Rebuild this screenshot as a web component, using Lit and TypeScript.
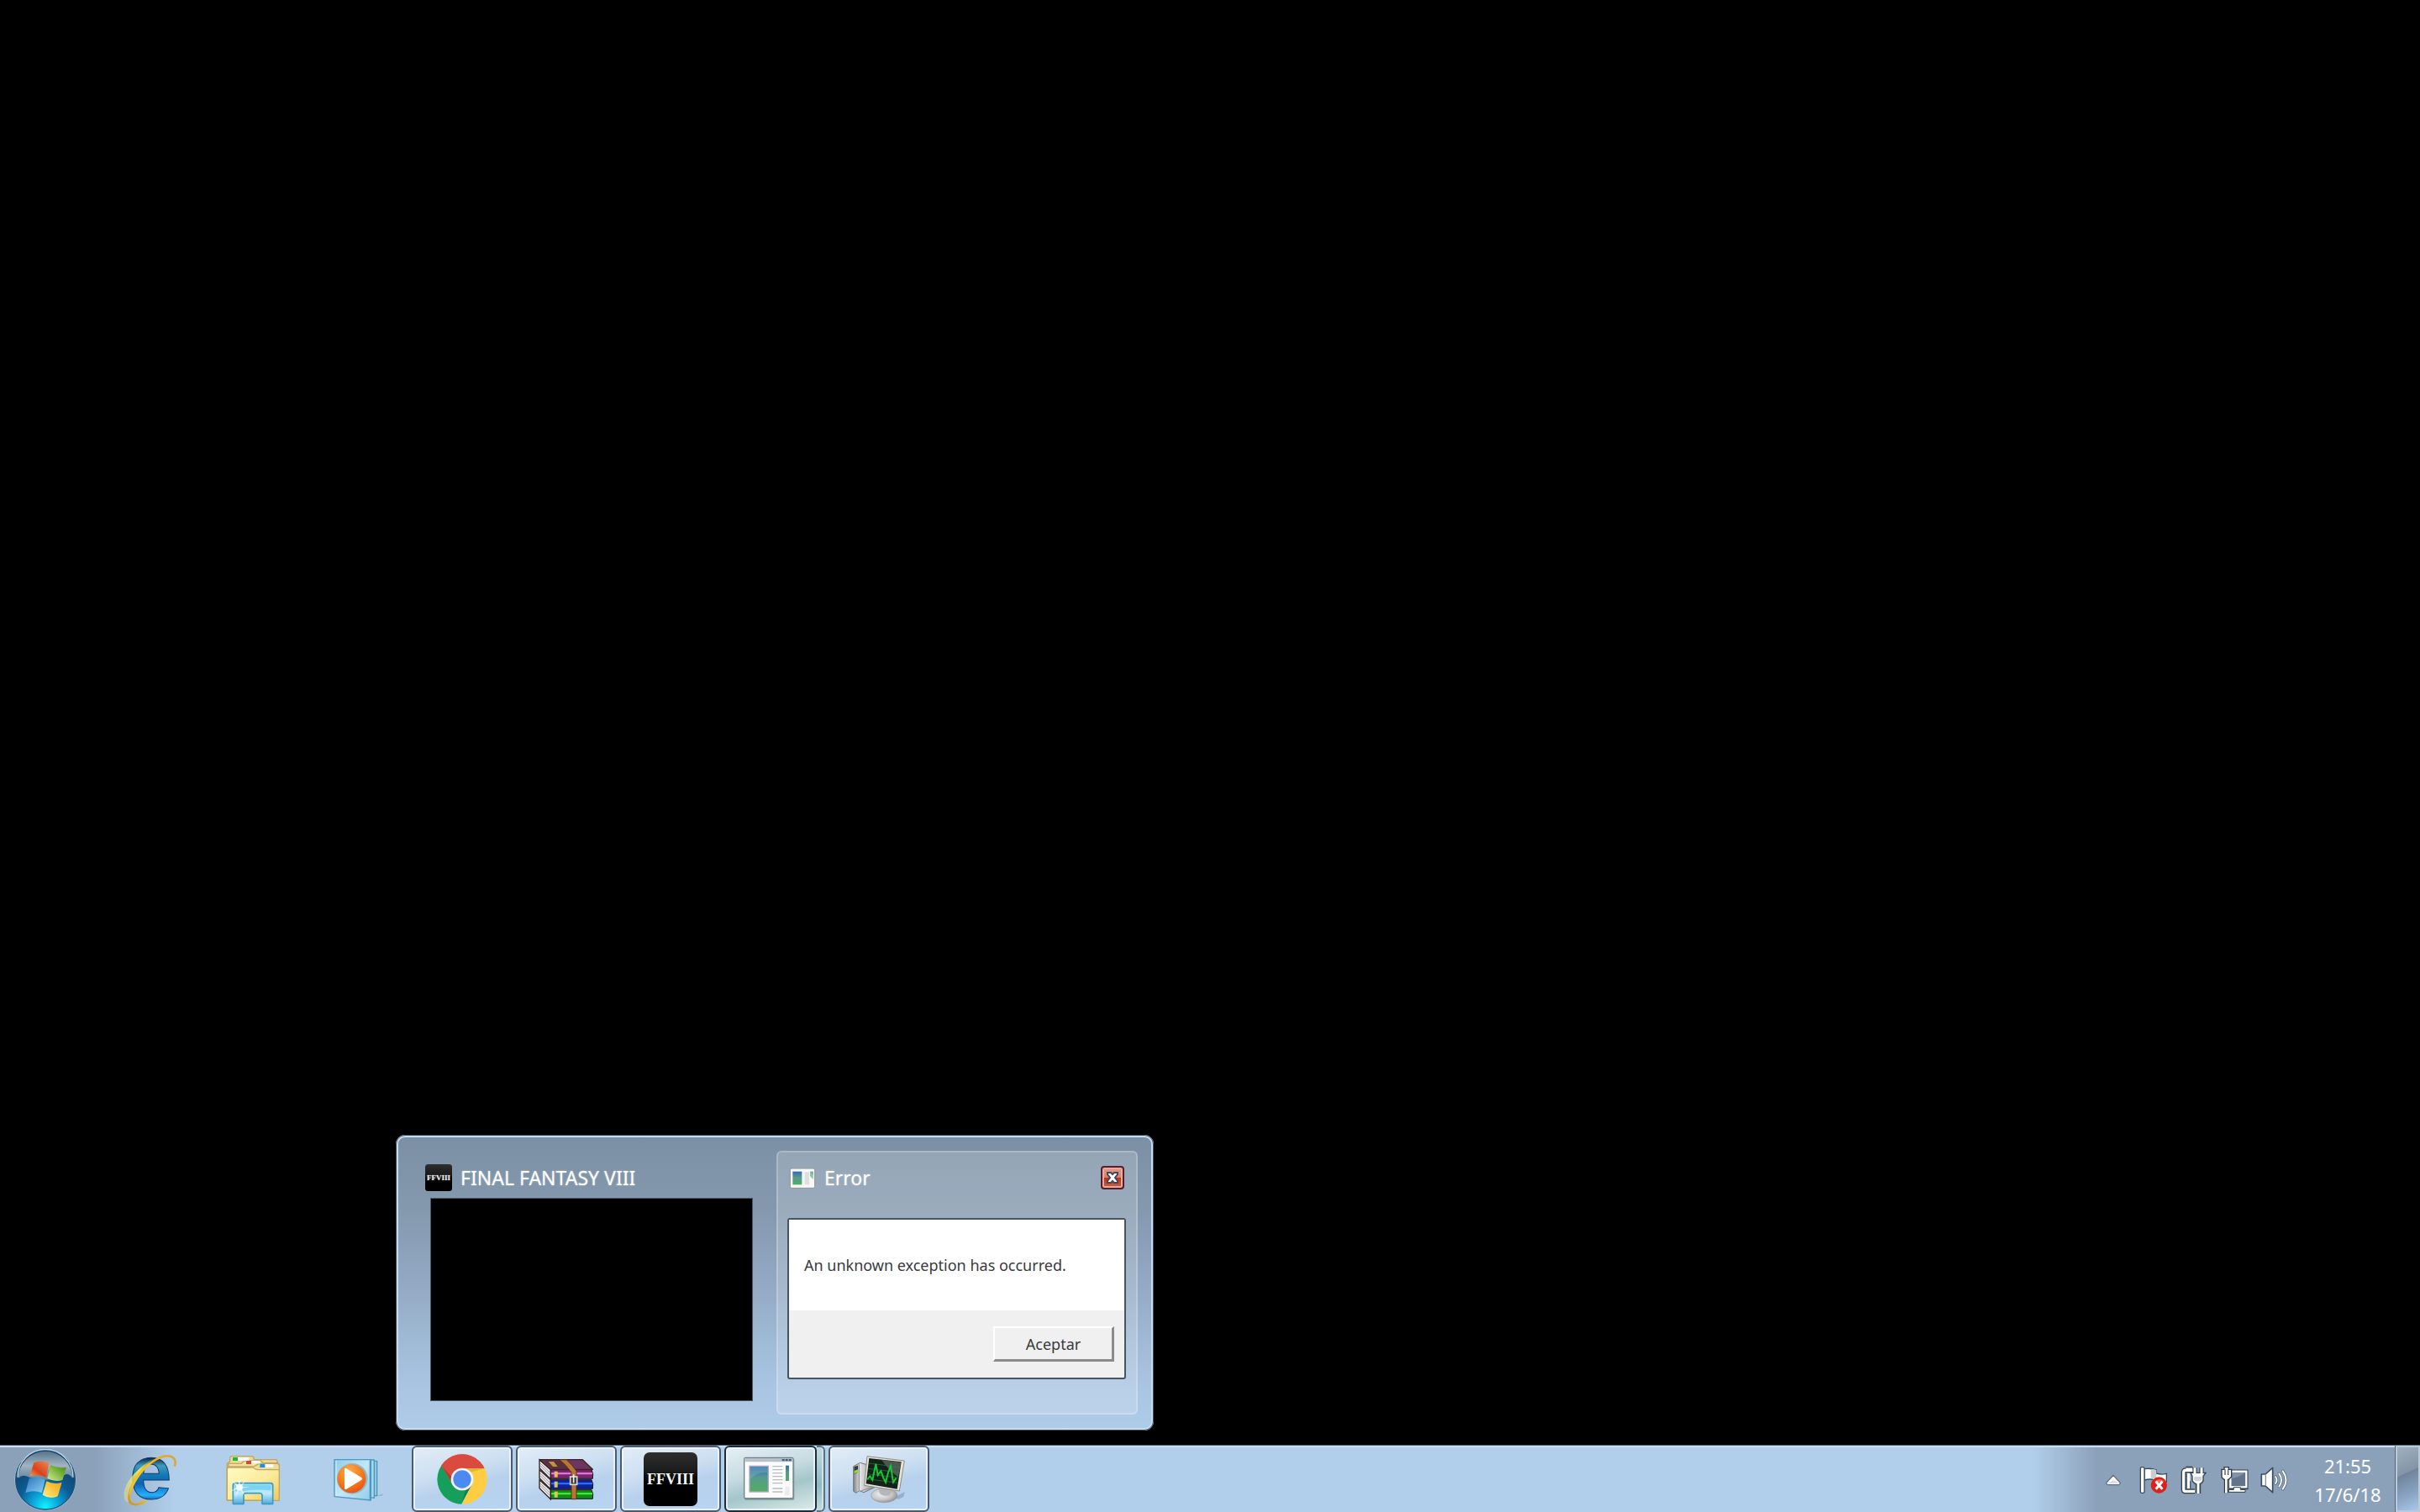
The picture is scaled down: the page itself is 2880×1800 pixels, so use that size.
import { LitElement, css, html, svg } from "lit";

const startOrb = html`
    <svg width="76" height="76" viewBox="47 38 228 228" aria-hidden="true">
        <defs>
            <radialGradient id="orb" cx="50%" cy="96%" r="80%">
                <stop offset="0" stop-color="#12f4ff"/>
                <stop offset=".28" stop-color="#0aa6dc"/>
                <stop offset=".58" stop-color="#0b5c93"/>
                <stop offset="1" stop-color="#123f66"/>
            </radialGradient>
            <linearGradient id="orbGloss" x1="0" y1="0" x2="0" y2="1">
                <stop offset="0" stop-color="#56748c"/>
                <stop offset=".5" stop-color="#a3b4c1"/>
                <stop offset="1" stop-color="#8096a8" stop-opacity=".75"/>
            </linearGradient>
            <linearGradient id="flagRed" x1="0" y1="1" x2="1" y2="0">
                <stop offset="0" stop-color="#f7a64a"/><stop offset=".4" stop-color="#d9401b"/><stop offset="1" stop-color="#f08a50"/>
            </linearGradient>
            <linearGradient id="flagGreen" x1="0" y1="1" x2="1" y2="0">
                <stop offset="0" stop-color="#d5ec9c"/><stop offset=".6" stop-color="#74b22f"/><stop offset="1" stop-color="#3c8b22"/>
            </linearGradient>
            <linearGradient id="flagBlue" x1="0" y1="0" x2="1" y2="1">
                <stop offset="0" stop-color="#2a73b9"/><stop offset="1" stop-color="#8cd2f5"/>
            </linearGradient>
            <linearGradient id="flagYellow" x1="1" y1="0" x2="0" y2="1">
                <stop offset="0" stop-color="#f6a313"/><stop offset=".5" stop-color="#fdc63c"/><stop offset="1" stop-color="#fff0a0"/>
            </linearGradient>
        </defs>
        <circle cx="161" cy="151" r="110" fill="#a9bfd2"/>
        <circle cx="161" cy="151" r="106" fill="url(#orb)" stroke="#1c5379" stroke-width="4"/>
        <path d="M64 146 A97 97 0 0 1 258 146 Q240 118 220 142 Q160 160 103 142 Q80 128 64 146Z" fill="url(#orbGloss)"/>
        <path d="M62 142 A99 99 0 0 1 260 142" fill="none" stroke="#c5d8e5" stroke-width="4"/>
        <path d="M120 90 Q148 78 174 92 L164 142 Q136 130 105 138Z" fill="url(#flagRed)"/>
        <path d="M180 98 Q206 112 236 106 L222 152 Q194 160 168 146Z" fill="url(#flagGreen)"/>
        <path d="M103 146 Q132 136 160 151 L148 197 Q120 186 90 197Z" fill="url(#flagBlue)"/>
        <path d="M165 156 Q192 169 220 160 L205 210 Q178 222 151 205Z" fill="url(#flagYellow)"/>
    </svg>`;

const explorerIe = html`
    <svg width="68" height="64" viewBox="434 54 204 192" aria-hidden="true">
        <defs>
            <linearGradient id="ieBlue" gradientUnits="userSpaceOnUse" x1="0" y1="72" x2="0" y2="222">
                <stop offset="0" stop-color="#0a2a55"/><stop offset=".18" stop-color="#3f9cc0"/>
                <stop offset=".4" stop-color="#1279b4"/><stop offset=".6" stop-color="#0d62b5"/>
                <stop offset=".88" stop-color="#25b0fa"/><stop offset="1" stop-color="#1560b0"/>
            </linearGradient>
            <linearGradient id="ieRing" x1="0" y1="1" x2="1" y2="0">
                <stop offset="0" stop-color="#d98e08"/><stop offset=".3" stop-color="#fbc41b"/>
                <stop offset=".65" stop-color="#fbb80f"/><stop offset="1" stop-color="#d9a23c"/>
            </linearGradient>
            <linearGradient id="ieHaze" x1="0" y1="1" x2="1" y2="0">
                <stop offset="0" stop-color="#f3ef86" stop-opacity=".3"/>
                <stop offset=".6" stop-color="#f0e455"/><stop offset="1" stop-color="#f0e455" stop-opacity="0"/>
            </linearGradient>
        </defs>
        <text class="ie" x="465" y="216">e</text>
        <path d="M448 222 C430 180 480 112 556 70 C500 112 456 170 464 226 C460 230 454 230 448 222Z" fill="url(#ieHaze)"/>
        <path d="M625 101 C634 78 622 62 594 64 C556 68 504 112 480 158 C458 198 454 232 480 237 C494 239 510 232 524 224"
            fill="none" stroke="url(#ieRing)" stroke-width="8"/>
        <path d="M534 90 C500 118 466 168 462 208 C480 166 502 122 540 92Z" fill="#ffc31f"/>
    </svg>`;

const fileExplorer = html`
    <svg width="66" height="62" viewBox="87 66 198 186" aria-hidden="true">
        <defs>
            <linearGradient id="folder" x1="0" y1="0" x2="1" y2="1">
                <stop offset="0" stop-color="#fffbc4"/><stop offset=".55" stop-color="#fbea9b"/><stop offset="1" stop-color="#ecc95a"/>
            </linearGradient>
            <linearGradient id="rail" x1="0" y1="0" x2="0" y2="1">
                <stop offset="0" stop-color="#8ddcf6"/><stop offset=".5" stop-color="#c2eafa"/><stop offset="1" stop-color="#4dabdc"/>
            </linearGradient>
        </defs>
        <g stroke="#c2a661" stroke-width="4" stroke-linejoin="round">
            <path d="M94 230 V100 L104 93 V78 Q104 74 110 74 H184 Q189 75 190 86 H268 Q273 88 274 98 L280 104 V232 H94Z" fill="#ecd796"/>
            <path d="M99 112 V100 H145 L155 90 H215 L222 98 H272 V112" fill="#f3dfa0"/>
            <path d="M94 230 V115 Q94 111 98 111 H188 L203 103 Q206 100 212 100 H272 Q280 101 280 107 V232Z" fill="#f0dc96"/>
            <path d="M94 230 V119 Q94 114 100 114 H186 Q196 122 205 122 H276 Q280 122 280 128 V232Z" fill="url(#folder)"/>
        </g>
        <path d="M132 78 H172 V90 H132Z M180 90 H212 V100 H180Z M229 102 H259 V114 H229Z" fill="#fffef5"/>
        <path d="M114 78 H132 V90 H114Z" fill="#13bd36"/>
        <path d="M162 90 H180 V102 H162Z" fill="#d14a31"/>
        <path d="M211 102 H229 V114 H211Z" fill="#1b91ef"/>
        <path d="M115 244 V178 Q115 170 124 170 H249 Q257 170 257 178 V244 H219 V212 Q217 206 211 206 H160 Q153 206 153 213 V244Z"
            fill="url(#rail)" stroke="#389bc8" stroke-width="5" stroke-linejoin="round"/>
        <path d="M122 178 H249 L250 196 Q190 190 154 199 H122Z" fill="#55c4e8" opacity=".5"/>
        <path d="M137 138 L141 178 L166 152 L145 182 L176 184 L145 188 L158 216 L138 192 L122 226 L132 190 L103 202 L129 184 L106 155 L134 178Z" fill="#fff" opacity=".6"/>
        <circle cx="138" cy="185" r="12" fill="#fff" opacity=".8"/>
    </svg>`;

const mediaPlayer = html`
    <svg width="56" height="54" viewBox="470 79 168 162" aria-hidden="true">
        <defs>
            <radialGradient id="orange" cx="42%" cy="25%" r="80%">
                <stop offset="0" stop-color="#ffab4f"/><stop offset=".5" stop-color="#f5811f"/><stop offset="1" stop-color="#e9500c"/>
            </radialGradient>
            <linearGradient id="sleeve" x1="0" y1="0" x2="1" y2="1">
                <stop offset="0" stop-color="#8ecbe6"/><stop offset=".5" stop-color="#c3e7f6"/><stop offset="1" stop-color="#93cde8"/>
            </linearGradient>
        </defs>
        <path d="M600 228 L650 208 L646 216 L625 217Z" fill="#7d93a5" opacity=".5"/>
        <g stroke="#4e98bf" stroke-width="4" stroke-linejoin="round">
            <path d="M560 92 H628 V216 L560 214Z" fill="#8dc7e1"/>
            <path d="M550 88 H618 V224 L550 214Z" fill="#a4d7ec"/>
            <path d="M476 87 H606 V232 L476 219Z" fill="url(#sleeve)"/>
        </g>
        <path d="M603 89 V230" stroke="#4b99c2" stroke-width="4"/>
        <path d="M482 90 V217" stroke="#d5f0fa" stroke-width="3"/>
        <circle cx="540" cy="155" r="55" fill="#8fb9cd"/>
        <circle cx="537" cy="155" r="51" fill="url(#orange)"/>
        <path d="M512 119 Q513 116 518 118 L573 151 Q577 155 573 159 L518 193 Q513 194 512 190Z" fill="#fff"/>
    </svg>`;

const chrome = html`
    <svg width="60" height="60" viewBox="120 60 180 180" aria-hidden="true">
        <defs><clipPath id="disc"><circle cx="210" cy="150" r="89"/></clipPath></defs>
        <g clip-path="url(#disc)">
            <path d="M120 60 H300 V111 H210 L176 170 L133 98Z" fill="#db4a3f"/>
            <path d="M120 60 L138 104 L176 170 L210 189 L244 170 L206 242 H118Z" fill="#159f5b"/>
            <path d="M210 111 H302 V242 H208 L244 170 Q255 150 244 131Z" fill="#ffcd41"/>
            <path d="M136 102 L133 60 H300 V111 H210 Q181 111 172 140 L168 156Z" fill="#db4a3f"/>
            <path d="M210 111 H291 L239 125Z" fill="#c9932d" opacity=".5"/>
            <path d="M138 104 L173 163 L170 139Z" fill="#7a382f" opacity=".5"/>
            <path d="M244 170 L210 232 L222 188Z" fill="#0b6a3c" opacity=".5"/>
        </g>
        <circle cx="210" cy="150" r="40" fill="#f3f4f6"/>
        <circle cx="210" cy="150" r="32" fill="#4a8af2"/>
    </svg>`;

const book = (y: number, edge: string, light: string) => svg`
    <path d="M486 ${y - 36} L526 ${y} V${y + 34} L486 ${y - 6}Z" fill="#e8e6ea" stroke="#35231c" stroke-width="4"/>
    <path d="M490 ${y - 22} L522 ${y + 9} M490 ${y - 14} L522 ${y + 19}" stroke="#9d98a5" stroke-width="3"/>
    <path d="M526 ${y} H672 Q680 ${y + 15} 676 ${y + 32} H526Z" fill="${edge}" stroke="#1b1220" stroke-width="3"/>
    <path d="M528 ${y + 10} H675 V${y + 17} H528Z" fill="${light}"/>
    <path d="M539 ${y + 6} H551 V${y + 27} H539Z" fill="#dcc65c"/>`;

const winrar = html`
    <svg width="66" height="52" viewBox="483 78 198 154" aria-hidden="true">
        ${book(193, "#168a16", "#37ee37")}
        ${book(157, "#0d2398", "#2a6cff")}
        ${book(121, "#7b2270", "#d97ad0")}
        <path d="M487 85 H640 L676 120 H526Z" fill="#6e3560" stroke="#3b241f" stroke-width="4" stroke-linejoin="round"/>
        <path d="M500 89 H565 L600 119 H532Z" fill="#4f2a26" opacity=".6"/>
        <path d="M518 92 H537 L551 110 H534Z" fill="#b59842"/>
        <path d="M558 85 H583 Q603 104 618 126 V226 H600 V130 Q580 103 558 85Z" fill="#b87635" stroke="#57311a" stroke-width="3"/>
        <rect x="596" y="146" width="24" height="28" fill="#3a3a3a" stroke="#d8d8d8" stroke-width="5"/>
        <path d="M608 138 V168" stroke="#eee" stroke-width="5"/>
    </svg>`;

const ffviii = (size: number) => html`
    <svg width=${size} height=${size} viewBox="0 0 64 64" aria-hidden="true">
        <defs>
            <linearGradient id="ffBack" x1="0" y1="0" x2="0" y2="1">
                <stop offset="0" stop-color="#2e2e2e"/><stop offset=".35" stop-color="#1c1c1c"/><stop offset=".55" stop-color="#000"/>
            </linearGradient>
        </defs>
        <rect width="64" height="64" rx="7" fill="url(#ffBack)"/>
        <text class="ff" x="32" y="38" text-anchor="middle">FFVIII</text>
    </svg>`;

const appWindow = html`
    <svg width="62" height="53" viewBox="459 69 186 159" aria-hidden="true">
        <defs>
            <linearGradient id="appPane" x1="0" y1="0" x2="0" y2="1">
                <stop offset="0" stop-color="#336bb0"/><stop offset=".45" stop-color="#559b91"/><stop offset="1" stop-color="#55ad5c"/>
            </linearGradient>
        </defs>
        <rect x="465" y="75" width="178" height="150" rx="5" fill="#5d7175" opacity=".5"/>
        <rect x="464" y="73" width="175" height="145" rx="5" fill="#fbfbfc" stroke="#737f88" stroke-width="4"/>
        <path d="M466 75 H637 V88 H466Z" fill="#b7c2cb"/>
        <path d="M599 78 H608 V85 H599Z M611 78 H620 V85 H611Z M623 78 H632 V85 H623Z" fill="#3c5a80"/>
        <rect x="483" y="103" width="67" height="92" fill="url(#appPane)" stroke="#a8acc6" stroke-width="4"/>
        <path d="M485 150 Q506 124 548 125 V105 H485Z" fill="#8ab9c9" opacity=".35"/>
        <path d="M565 104 H601 M565 116 H601 M565 128 H601 M565 140 H601 M565 152 H601 M565 164 H601 M565 183 H601 M565 195 H601" stroke="#b9bcbf" stroke-width="4"/>
        <path d="M612 101 H624 V156 H612Z" fill="url(#appPane)"/>
        <path d="M612 176 H626 V208 H608Z" fill="#ececee"/>
    </svg>`;

const appWindowSmall = html`
    <svg width="32" height="27" viewBox="88 145 96 81" aria-hidden="true">
        <rect x="92" y="151" width="88" height="70" rx="5" fill="#f7f7f8" stroke="#8e9599" stroke-width="3"/>
        <rect x="101" y="162" width="33" height="47" fill="url(#appPane)"/>
        <path d="M144 164 H160 V209 H144Z" fill="#dfdfdf"/>
        <path d="M163 162 H174 V190 L163 178Z" fill="#8fc39c"/>
        <path d="M163 162 H174 V174Z" fill="#7aa0c8"/>
    </svg>`;

const monitor = html`
    <svg width="64" height="58" viewBox="134 62 192 174" aria-hidden="true">
        <defs>
            <linearGradient id="case" x1="0" y1="0" x2="1" y2="0">
                <stop offset="0" stop-color="#808184"/><stop offset=".3" stop-color="#e4e4e6"/><stop offset="1" stop-color="#8e9094"/>
            </linearGradient>
            <radialGradient id="foot" cx="40%" cy="40%" r="65%">
                <stop offset="0" stop-color="#f2f2f2"/><stop offset=".6" stop-color="#c8c8ca"/><stop offset="1" stop-color="#8c8e91"/>
            </radialGradient>
        </defs>
        <path d="M280 216 L322 194 L318 212 L300 220Z" fill="#718dab" opacity=".5"/>
        <path d="M139 103 L162 90 L184 96 L215 178 L176 196 L160 190 L148 198 L139 192Z" fill="url(#case)" stroke="#77787c" stroke-width="3"/>
        <path d="M159 94 V188 M166 190 L208 178" stroke="#8b8c90" stroke-width="3"/>
        <path d="M142 105 L155 100 V124 L142 130Z" fill="#333842"/>
        <path d="M142 119 L155 114 V124 L142 129Z" fill="#88e21d"/>
        <ellipse cx="249" cy="207" rx="47" ry="25" fill="url(#foot)" stroke="#98999c" stroke-width="2"/>
        <path d="M226 174 L282 183 L268 207 Q244 211 233 200Z" fill="#b5b6b9"/>
        <path d="M188 67 L321 83 L303 191 L178 171Z" fill="#e6e5d9" stroke="#8d8d85" stroke-width="3"/>
        <path d="M195 74 L310 87 L295 184 L184 165Z" fill="#142018"/>
        <path d="M240 80 L309 88 L299 142 Q262 114 240 80Z" fill="#747b76" opacity=".6"/>
        <path d="M193 92 L308 106 M190 111 L305 125 M188 130 L302 144 M186 148 L299 162" stroke="#188a39" stroke-width="2"/>
        <path d="M188 150 L198 138 L207 152 L219 94 L226 134 L237 120 L246 144 L254 160 L264 122 L272 102 L281 160 L292 144"
            fill="none" stroke="#18c63a" stroke-width="6"/>
    </svg>`;

const trayArrow = html`
    <svg width="20" height="16" viewBox="315 132 60 48" aria-hidden="true">
        <path d="M345 139 L370 166 Q370 172 364 173 H326 Q320 172 320 166Z" fill="#fff" stroke="#60708a" stroke-width="4"/>
        <path d="M325 167 L345 157 L366 167Z" fill="#d5d8e5"/>
    </svg>`;

const trayFlag = html`
    <svg width="36" height="36" viewBox="438 102 108 108" aria-hidden="true">
        <path d="M459 116 Q480 112 502 120 V132 Q520 138 538 133 V162 Q514 168 496 156 Q480 150 459 156Z" fill="#fdfdfd" stroke="#3a4c5b" stroke-width="4"/>
        <path d="M482 117 Q494 116 502 120 V150 L482 149Z" fill="#c8cdd2"/>
        <rect x="445" y="110" width="14" height="92" rx="5" fill="#fff" stroke="#3a4c5b" stroke-width="4"/>
        <circle cx="511" cy="174" r="29" fill="#db2118"/>
        <path d="M495 162 Q510 146 530 160 Q518 168 495 162Z" fill="#f0796c"/>
        <path d="M500 161 L523 188 M523 161 L500 188" stroke="#fff" stroke-width="9"/>
    </svg>`;

const trayPower = html`
    <svg width="34" height="36" viewBox="584 102 102 108" aria-hidden="true">
        <g fill="none" stroke-linejoin="round">
            <path d="M632 121 H602 Q598 122 598 130 V190 Q598 196 604 196 H638" stroke="#33434f" stroke-width="18"/>
            <path d="M606 114 H630" stroke="#33434f" stroke-width="14"/>
            <path d="M606 116 H630" stroke="#fff" stroke-width="7"/>
            <path d="M632 121 H602 Q598 122 598 130 V190 Q598 196 604 196 H638" stroke="#fff" stroke-width="10"/>
            <path d="M616 132 V186" stroke="#fff" stroke-width="10"/>
            <path d="M608 132 V186 M622 160 V186" stroke="#445563" stroke-width="4"/>
            <path d="M638 112 V134 M662 112 V134" stroke="#33434f" stroke-width="16"/>
            <path d="M650 170 V204" stroke="#33434f" stroke-width="19"/>
        </g>
        <path d="M623 130 H677 L668 142 V158 Q662 170 650 172 Q636 170 629 158 V142Z" fill="#fff" stroke="#33434f" stroke-width="4"/>
        <path d="M638 112 V134 M662 112 V134 M650 168 V204" stroke="#fff" stroke-width="9"/>
        <path d="M636 144 H662 V156 Q650 164 636 156Z" fill="#ccd2d8"/>
    </svg>`;

const trayNetwork = html`
    <svg width="36" height="36" viewBox="36 102 108 108" aria-hidden="true">
        <rect x="76" y="124" width="58" height="60" fill="#5e7186" stroke="#2e3b47" stroke-width="11"/>
        <rect x="76" y="125" width="57" height="56" fill="#617489" stroke="#fff" stroke-width="7"/>
        <path d="M80 150 Q104 148 128 130 V129 H80Z" fill="#8193a5"/>
        <path d="M88 182 H112 V190 H129 V199 H70 V190 H88Z" fill="#fff" stroke="#2e3b47" stroke-width="3"/>
        <path d="M61 150 V202" stroke="#2e3b47" stroke-width="15"/>
        <path d="M45 118 H54 V110 H70 V118 H80 V144 L70 154 H53 L45 146Z" fill="#fff" stroke="#2e3b47" stroke-width="4"/>
        <path d="M61 148 V202" stroke="#fff" stroke-width="8"/>
        <path d="M57 118 V138 M68 118 V138" stroke="#4b5a68" stroke-width="4"/>
    </svg>`;

const trayVolume = html`
    <svg width="36" height="36" viewBox="181 102 108 108" aria-hidden="true">
        <path d="M188 135 H202 L228 112 V200 L202 177 H188Z" fill="#fff" stroke="#3a4c5b" stroke-width="5" stroke-linejoin="round"/>
        <path d="M203 137 V176" stroke="#8491a0" stroke-width="4"/>
        <g fill="none" stroke-linecap="round">
            <path d="M238 144 Q247 156 238 168 M251 133 Q267 156 251 179 M264 124 Q287 156 264 188" stroke="#4a5d70" stroke-width="10"/>
            <path d="M238 144 Q247 156 238 168 M251 133 Q267 156 251 179 M264 124 Q287 156 264 188" stroke="#f6f8fa" stroke-width="6"/>
        </g>
    </svg>`;

const closeCross = html`
    <svg width="18" height="18" viewBox="0 0 18 18" aria-hidden="true">
        <path d="M3 3 H7 L9 5 L11 3 H15 V5 L12 9 L15 13 V15 H11 L9 13 L7 15 H3 V13 L6 9 L3 5Z"
            fill="#fff" stroke="#414a5c" stroke-width="2"/>
    </svg>`;

export class AppRoot extends LitElement {

    static properties = {
        previewOpen: { type: Boolean },
    };

    static styles = css`
        :host {
            display: flex;
            flex-direction: column;
            min-height: 100vh;
            background: #000;
            color: #fff;
            font-family: "Noto Sans", "Open Sans", sans-serif;
            font-size: 23px;
            line-height: 32px;
        }
        button {
            margin: 0;
            padding: 0;
            border: 0;
            background: none;
            color: inherit;
            font: inherit;
        }
        svg {
            display: block;
            flex: none;
            overflow: visible;
        }
        .ie {
            font: bold 270px "Liberation Sans", sans-serif;
            fill: url(#ieBlue);
            stroke: #12365f;
            stroke-width: 3px;
        }
        .ff {
            font: bold 18px "Liberation Serif", serif;
            fill: #f4f4f4;
        }
        .desktop {
            flex: 1;
            display: flex;
            align-items: flex-end;
            padding: 0 0 18px 471px;
        }

        .previews {
            box-sizing: border-box;
            display: flex;
            gap: 4px;
            padding: 16px;
            border: 3px solid #c6dcee;
            border-radius: 11px;
            outline: 1px solid #3d4c5c;
            outline-offset: -1px;
            background: linear-gradient(#7b90a5, #8499ae 25%, #93a8c3 50%, #9ebad4 70%, #a9c5e2 86%, #aecbe8);
        }
        .preview {
            box-sizing: border-box;
            width: 430px;
            height: 314px;
            display: flex;
            flex-direction: column;
            border: 2px solid transparent;
            border-radius: 6px;
            padding: 14px;
        }
        .preview.active {
            padding: 14px 12px 0 11px;
            border-color: rgba(255, 255, 255, 0.22);
            background: rgba(255, 255, 255, 0.18);
        }
        .caption {
            display: flex;
            align-items: center;
            gap: 10px;
            height: 32px;
            text-shadow: 0 0 2px rgba(255, 255, 255, 0.5);
        }
        .active .caption {
            padding: 0 2px;
        }
        .caption .close {
            margin-left: auto;
        }
        .close {
            box-sizing: border-box;
            width: 28px;
            height: 28px;
            display: grid;
            place-items: center;
            border: 2px solid #55202b;
            border-radius: 4px;
            box-shadow: inset 0 0 0 2px #eba79b;
            background: linear-gradient(#e19b8b, #d8806c 48%, #b83219 50%, #cc604b);
        }
        .game {
            height: 240px;
            width: 382px;
            margin: 9px 7px 0;
            background: #000;
            box-shadow: 0 0 0 1px #4a5866;
        }
        .dialog {
            box-sizing: border-box;
            height: 192px;
            display: flex;
            flex-direction: column;
            margin-top: 32px;
            border: 2px solid #47535f;
            border-radius: 3px;
            background: #f0f0f0;
            color: #3a3a40;
            font-size: 18px;
        }
        .message {
            box-sizing: border-box;
            height: 108px;
            margin: 0;
            padding: 38px 18px;
            background: #fff;
        }
        .answer {
            flex: 1;
            display: flex;
            justify-content: flex-end;
            align-items: center;
            padding-right: 12px;
        }
        .accept {
            box-sizing: border-box;
            width: 144px;
            height: 42px;
            border: solid;
            border-width: 2px 3px 3px 2px;
            border-color: #fff #8c8c8c #8c8c8c #fff;
            background: #f0f0f0;
        }

        .taskbar {
            box-sizing: border-box;
            height: 79px;
            display: flex;
            border-top: 2px solid #cbddef;
            box-shadow: 0 -1px #4d5b69;
            background: linear-gradient(90deg, #8ba1ba 112px, #b1cfeb 208px);
        }
        .start {
            width: 116px;
            display: flex;
            align-items: center;
            padding-left: 16px;
        }
        .launch {
            width: 123px;
            display: grid;
            place-items: center;
        }
        .tasks {
            display: flex;
            gap: 4px;
            margin: -2px 0 0 5px;
        }
        .task {
            box-sizing: border-box;
            width: 120px;
            height: 79px;
            display: grid;
            place-items: center;
            border: 2px solid #4b5b6d;
            border-radius: 6px;
            box-shadow: inset 0 0 0 2px rgba(238, 246, 253, 0.85);
            background: linear-gradient(165deg, #e2edf7 0%, #cbdef1 40%, #b7d1ed 60%, #b8d4f0 100%);
        }
        .stack {
            display: flex;
            width: 120px;
        }
        .stack .task {
            width: 110px;
            padding-right: 4px;
            border-color: #1d2c37;
            background: linear-gradient(165deg, #e6f0f5 0%, #c5dbe0 40%, #a3c6ca 62%, #dcebe9 100%);
        }
        .edge {
            box-sizing: border-box;
            width: 10px;
            border: 2px solid #5b7286;
            border-left: 0;
            border-radius: 0 6px 6px 0;
            box-shadow: inset -2px 0 #cfe3e6;
            background: linear-gradient(#c3d8df, #8fbabf 60%, #c1dcdc);
        }
        .tray {
            display: flex;
            margin-left: auto;
            padding-left: 73px;
            background: linear-gradient(90deg, #b1cfeb, #8ba1ba 78px);
        }
        .tray-icon {
            width: 48px;
            display: grid;
            place-items: center;
        }
        .clock {
            width: 120px;
            padding: 5px 0 0 6px;
            box-sizing: border-box;
            text-align: center;
            font-size: 22px;
            line-height: 34px;
        }
        .show-desktop {
            box-sizing: border-box;
            width: 29px;
            margin-top: -2px;
            border: 2px solid #b9cbdb;
            outline: 1px solid #586879;
            background: linear-gradient(155deg, #a0b0bf, #8395a6 40%, #70859b 42%, #8ba7c5 75%, #a9c9e8);
        }
    `;

    previewOpen: boolean;

    constructor() {
        super();
        this.previewOpen = true;
    }

    renderPreviews() {
        return html`
            <section class="previews">
                <article class="preview">
                    <div class="caption">
                        ${ffviii(32)}
                        <span>FINAL FANTASY VIII</span>
                    </div>
                    <div class="game"></div>
                </article>
                <article class="preview active">
                    <div class="caption">
                        ${appWindowSmall}
                        <span>Error</span>
                        <button class="close" aria-label="Cerrar" @click=${this.closePreview}>${closeCross}</button>
                    </div>
                    <div class="dialog">
                        <p class="message">An unknown exception has occurred.</p>
                        <div class="answer">
                            <button class="accept" @click=${this.closePreview}>Aceptar</button>
                        </div>
                    </div>
                </article>
            </section>
        `;
    }

    render() {
        return html`
            <main class="desktop">
                ${this.previewOpen ? this.renderPreviews() : ""}
            </main>
            <nav class="taskbar">
                <button class="start" aria-label="Inicio">${startOrb}</button>
                <button class="launch" aria-label="Internet Explorer">${explorerIe}</button>
                <button class="launch" aria-label="Explorador de Windows">${fileExplorer}</button>
                <button class="launch" aria-label="Windows Media Player">${mediaPlayer}</button>
                <div class="tasks">
                    <button class="task" aria-label="Google Chrome">${chrome}</button>
                    <button class="task" aria-label="WinRAR">${winrar}</button>
                    <button class="task" aria-label="FINAL FANTASY VIII">${ffviii(64)}</button>
                    <div class="stack">
                        <button class="task" aria-label="Error" @click=${this.openPreview}>${appWindow}</button>
                        <span class="edge"></span>
                    </div>
                    <button class="task" aria-label="Monitor">${monitor}</button>
                </div>
                <div class="tray">
                    <button class="tray-icon" aria-label="Mostrar iconos ocultos">${trayArrow}</button>
                    <button class="tray-icon" aria-label="Centro de actividades">${trayFlag}</button>
                    <button class="tray-icon" aria-label="Bateria">${trayPower}</button>
                    <button class="tray-icon" aria-label="Red">${trayNetwork}</button>
                    <button class="tray-icon" aria-label="Volumen">${trayVolume}</button>
                    <div class="clock">
                        <div>21:55</div>
                        <div>17/6/18</div>
                    </div>
                    <button class="show-desktop" aria-label="Mostrar escritorio"></button>
                </div>
            </nav>
        `;
    }

    openPreview() {
        this.previewOpen = true;
    }

    closePreview() {
        this.previewOpen = false;
    }
}
customElements.define("app-root", AppRoot);
